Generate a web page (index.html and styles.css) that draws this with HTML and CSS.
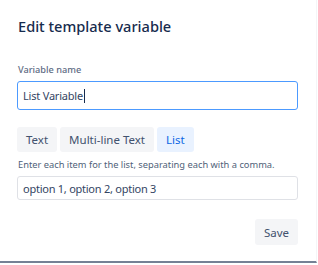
FILE: index.html
```html
<!DOCTYPE html>
<html lang="en">
<head>
    <meta charset="UTF-8">
    <title>Edit template variable</title>
    <link rel="stylesheet" href="styles.css">
</head>
<body>
    <div class="modal">
        <h1 class="modal-title">Edit template variable</h1>

        <label class="field-label" for="varName">Variable name</label>
        <div class="text-field focused">
            <span id="varName">List Variable</span><span class="caret"></span>
        </div>

        <div class="type-tabs">
            <button class="tab">Text</button>
            <button class="tab">Multi-line Text</button>
            <button class="tab selected">List</button>
        </div>

        <p class="help-text">Enter each item for the list, separating each with a comma.</p>
        <div class="text-field small">option 1, option 2, option 3</div>

        <div class="modal-footer">
            <button class="save-btn">Save</button>
        </div>
    </div>
</body>
</html>
```

FILE: styles.css
```css
body { margin: 0; background: #fff; font-family: "Noto Sans", "Open Sans", Arial, sans-serif; color: #172B4D; }
.modal { width: 317px; height: 263px; box-sizing: border-box; padding: 0 18px 0 17px; border-bottom: 2px solid #758195; border-right: 1px solid #f4f5f7; display: flex; flex-direction: column; }
.modal-title { margin: 16px 0 0 1px; font-size: 14.6px; font-weight: 500; line-height: 20px; color: #172B4D; }
.field-label { margin: 27px 0 0 1px; font-size: 9.2px; line-height: 14px; color: #5E6C84; font-weight: 500; }
.text-field { margin-top: 4px; height: 29px; box-sizing: border-box; border: 1px solid #DFE1E6; border-radius: 3px; padding: 0 5px; display: flex; align-items: center; font-size: 11px; letter-spacing: -0.2px; color: #344563; }
.text-field.focused { border-color: #4C9AFF; }
.text-field.small { height: 24px; font-size: 11px; letter-spacing: -0.25px; }
.caret { display: inline-block; width: 1px; height: 14px; margin-left: 1px; background: #172B4D; }
.type-tabs { display: flex; gap: 3px; margin-top: 17px; }
.tab { height: 25px; border: none; border-radius: 3px; background: #F4F5F7; color: #42526E; font-family: inherit; font-size: 11.5px; padding: 0 9px; }
.tab.selected { background: #E9F2FF; color: #0C66E4; }
.help-text { margin: 6px 0 0 1px; font-size: 9.3px; line-height: 14px; color: #505F79; }
.modal-footer { display: flex; justify-content: flex-end; margin-top: 19px; }
.save-btn { width: 43px; height: 26px; border: none; border-radius: 3px; background: #F4F5F7; color: #42526E; font-family: inherit; font-size: 11.5px; padding: 0; }
```
